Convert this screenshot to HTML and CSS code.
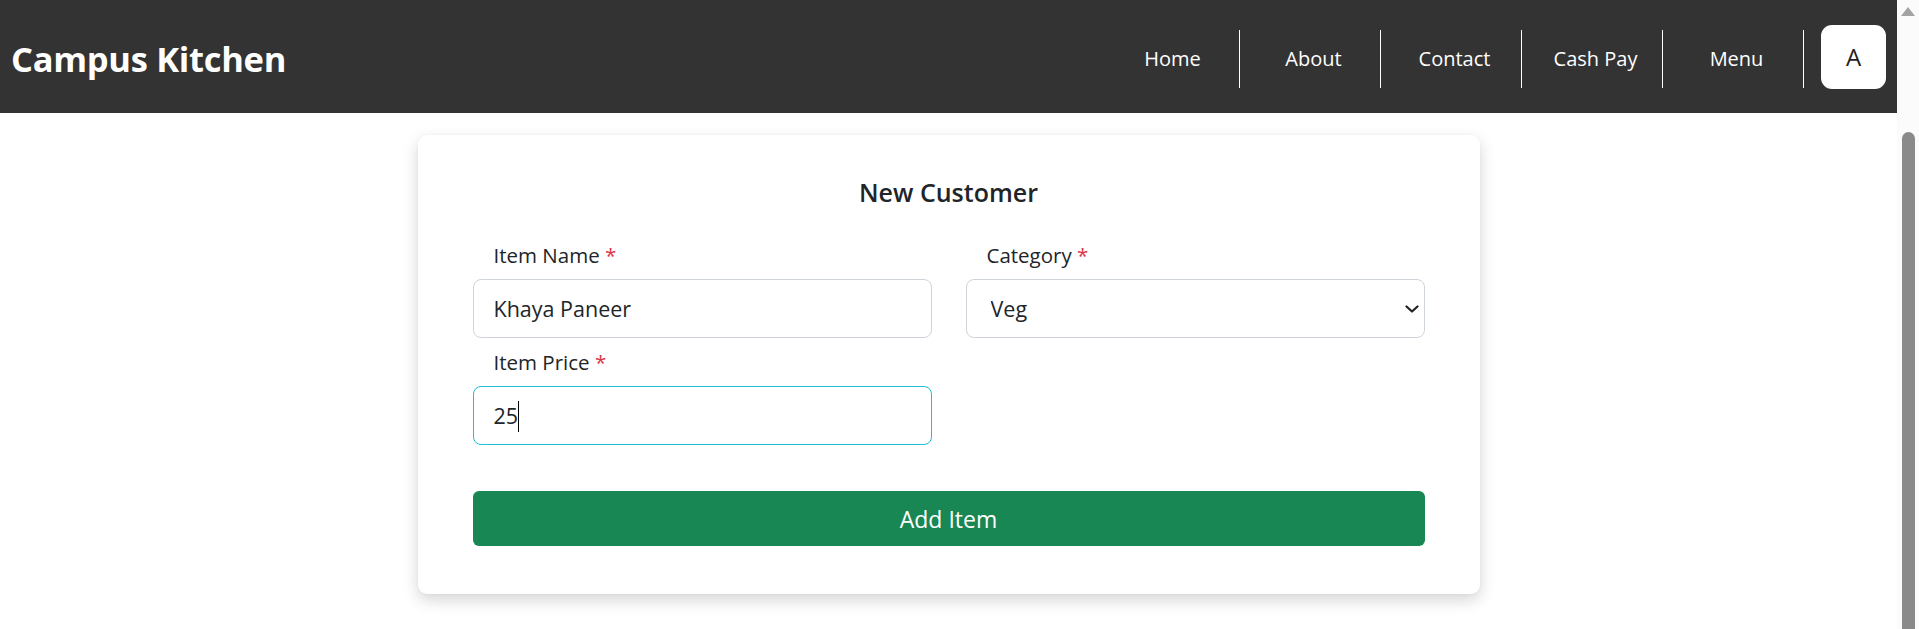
FILE: index.html
```html
<!DOCTYPE html>
<html lang="en">
<head>
<meta charset="utf-8">
<title>Campus Kitchen</title>
<link rel="stylesheet" href="styles.css">
</head>
<body>
<div class="screen">
  <div class="page">
    <nav class="navbar">
      <div class="brand">Campus Kitchen</div>
      <ul class="nav-links">
        <li><a href="#">Home</a></li>
        <li><a href="#">About</a></li>
        <li><a href="#">Contact</a></li>
        <li><a href="#">Cash Pay</a></li>
        <li><a href="#">Menu</a></li>
      </ul>
      <div class="avatar">A</div>
    </nav>
    <main class="content">
      <form class="card">
        <h2 class="card-title">New Customer</h2>
        <div class="form-grid">
          <div class="field">
            <label class="label">Item Name <span class="req">*</span></label>
            <input class="control" type="text" value="Khaya Paneer">
          </div>
          <div class="field">
            <label class="label">Category <span class="req">*</span></label>
            <select class="control select">
              <option>Veg</option>
              <option>Non-Veg</option>
            </select>
          </div>
          <div class="field">
            <label class="label">Item Price <span class="req">*</span></label>
            <div class="input-wrap">
              <input class="control focused" type="text" value="25">
              <span class="caret"></span>
            </div>
          </div>
        </div>
        <button class="btn" type="button">Add Item</button>
      </form>
    </main>
  </div>
  <div class="scrollbar">
    <div class="sb-arrow"></div>
    <div class="sb-thumb"></div>
  </div>
</div>
</body>
</html>
```
FILE: styles.css
```css
* { box-sizing: border-box; }
html, body { margin: 0; padding: 0; height: 629px; overflow: hidden; }
body {
  font-family: "Open Sans", "Liberation Sans", sans-serif;
  color: #212529;
  background: #fff;
}
.screen { display: flex; height: 629px; }
.page { flex: 1; min-width: 0; }

.navbar {
  height: 113px;
  background: #333333;
  display: flex;
  align-items: center;
  padding: 0 11px 0 11px;
}
.brand {
  color: #fff;
  font-weight: 700;
  font-size: 34.5px;
  letter-spacing: -0.3px;
  padding-top: 4px;
  flex: 1;
}
.nav-links {
  list-style: none;
  margin: 4px 0 0;
  padding: 0;
  display: flex;
  align-items: center;
}
.nav-links li {
  width: 141px;
  height: 58px;
  border-right: 1px solid #fff;
  padding-left: 7px;
  display: flex;
  align-items: center;
  justify-content: center;
}
.nav-links a {
  color: #fff;
  text-decoration: none;
  font-size: 20px;
}
.avatar {
  margin-left: 17px;
  width: 65px;
  height: 64px;
  background: #fff;
  border-radius: 11px;
  display: flex;
  align-items: center;
  justify-content: center;
  font-size: 24px;
  color: #222;
}

.content {
  display: flex;
  justify-content: center;
  padding-top: 22px;
}
.card {
  width: 1062px;
  background: #fff;
  border-radius: 9px;
  box-shadow: 0 6px 16px rgba(0, 0, 0, 0.17), 0 0 3px rgba(0,0,0,0.04);
  padding: 42px 55px 48px;
}
.card-title {
  margin: 0 0 35px;
  text-align: center;
  font-size: 25px;
  font-weight: 600;
  line-height: 30px;
  color: #212529;
}
.form-grid {
  display: grid;
  grid-template-columns: 1fr 1fr;
  column-gap: 34px;
  row-gap: 11px;
}
.field { display: flex; flex-direction: column; }
.label {
  font-size: 20.5px;
  line-height: 27px;
  padding-left: 21px;
  margin-bottom: 10px;
  color: #212529;
}
.req { color: #dc3545; }
.control {
  width: 100%;
  height: 59px;
  border: 1px solid #ced4da;
  border-radius: 8px;
  padding: 0 20px;
  font-family: inherit;
  font-size: 21.5px;
  color: #212529;
  background: #fff;
  outline: none;
}
.select {
  appearance: none;
  -webkit-appearance: none;
  padding-left: 24px;
  background-image: url("data:image/svg+xml,%3Csvg xmlns='http://www.w3.org/2000/svg' width='14' height='8' viewBox='0 0 14 8'%3E%3Cpath d='M1.5 1.5 7 6.5 12.5 1.5' fill='none' stroke='%23222' stroke-width='2.2' stroke-linecap='round' stroke-linejoin='round'/%3E%3C/svg%3E");
  background-repeat: no-repeat;
  background-position: right 5px center;
  background-size: 14px 8px;
}
.input-wrap { position: relative; }
.focused { border-color: #1fbfd6; }
.caret {
  position: absolute;
  left: 45px;
  top: 15px;
  width: 1px;
  height: 31px;
  background: #000;
}
.btn {
  display: block;
  width: 100%;
  height: 55px;
  margin-top: 46px;
  border: none;
  border-radius: 6px;
  background: #198754;
  color: #fff;
  font-family: inherit;
  font-size: 23px;
}

.scrollbar {
  width: 22px;
  background: #fbfbfb;
  display: flex;
  flex-direction: column;
  align-items: center;
}
.sb-arrow {
  margin-top: 7px;
  width: 0;
  height: 0;
  border-left: 7px solid transparent;
  border-right: 7px solid transparent;
  border-bottom: 9px solid #a3a3a3;
}
.sb-thumb {
  margin-top: 116px;
  width: 13px;
  flex: 1;
  background: #8a8a8a;
  border-radius: 7px 7px 0 0;
}
```
